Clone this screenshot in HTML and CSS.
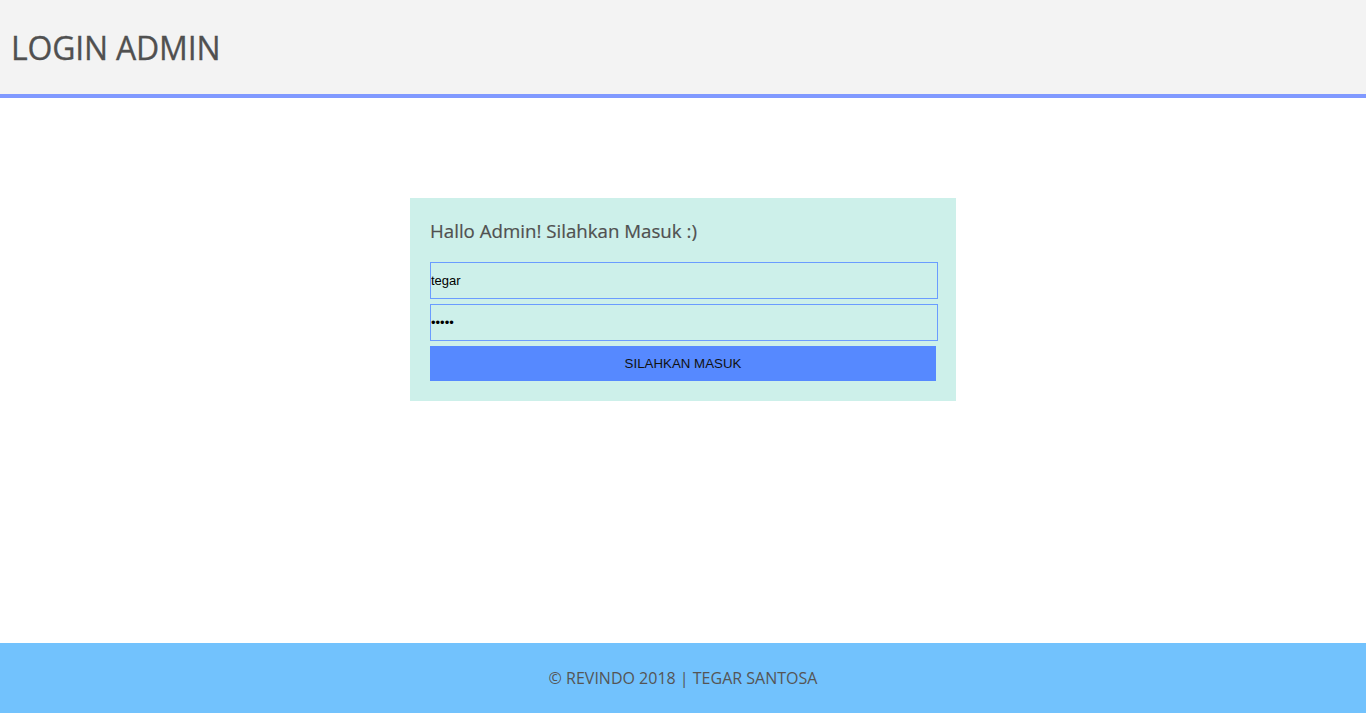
FILE: index.html
```html
<!DOCTYPE html>
<html>
<head>
<meta charset="utf-8">
<title>Login Admin</title>
<link rel="stylesheet" href="styles.css">
</head>
<body>
<div class="page">
  <header class="header">
    <h1 class="title">LOGIN ADMIN</h1>
  </header>
  <main class="main">
    <form class="card">
      <h2 class="card-title">Hallo Admin! Silahkan Masuk :)</h2>
      <input class="field" type="text" value="tegar">
      <input class="field" type="password" value="tegar">
      <button class="btn" type="button">SILAHKAN MASUK</button>
    </form>
  </main>
  <footer class="footer">© REVINDO 2018 | TEGAR SANTOSA</footer>
</div>
</body>
</html>
```

FILE: styles.css
```css
html, body {
  margin: 0;
  padding: 0;
  height: 100%;
}
body {
  font-family: "Open Sans", "Noto Sans", sans-serif;
  color: #555;
  background: #fff;
}
.page {
  display: flex;
  flex-direction: column;
  height: 713px;
}
.header {
  height: 94px;
  background: #f3f3f3;
  border-bottom: 4px solid #8099ff;
  display: flex;
  align-items: center;
  padding-left: 11px;
}
.title {
  margin: 0;
  font-size: 32px;
  font-weight: 400;
  color: #505050;
  letter-spacing: -0.2px;
  -webkit-text-stroke: 0.3px #505050;
}
.main {
  flex: 1;
  display: flex;
  justify-content: center;
  align-items: flex-start;
  padding-top: 100px;
}
.card {
  width: 506px;
  background: #cdf0ea;
  padding: 20px;
  display: flex;
  flex-direction: column;
}
.card-title {
  margin: 0 0 18px 0;
  font-size: 18.7px;
  font-weight: 400;
  color: #505050;
  line-height: 26px;
  -webkit-text-stroke: 0.2px #505050;
}
.field {
  box-sizing: border-box;
  width: 508px;
  height: 37px;
  margin: 0 0 5px 0;
  padding: 0;
  border: 1px solid #6a9cff;
  background: #cdf0ea;
  font-family: "Liberation Sans", Arial, sans-serif;
  font-size: 13px;
  color: #000;
  outline: none;
}
.btn {
  width: 506px;
  height: 35px;
  border: none;
  background: #5689ff;
  font-family: "Liberation Sans", Arial, sans-serif;
  font-size: 13.3px;
  color: #111;
  padding: 0;
  margin: 0;
}
.footer {
  height: 70px;
  background: #72c2fd;
  display: flex;
  align-items: center;
  justify-content: center;
  font-size: 16px;
  color: #555;
}
```
